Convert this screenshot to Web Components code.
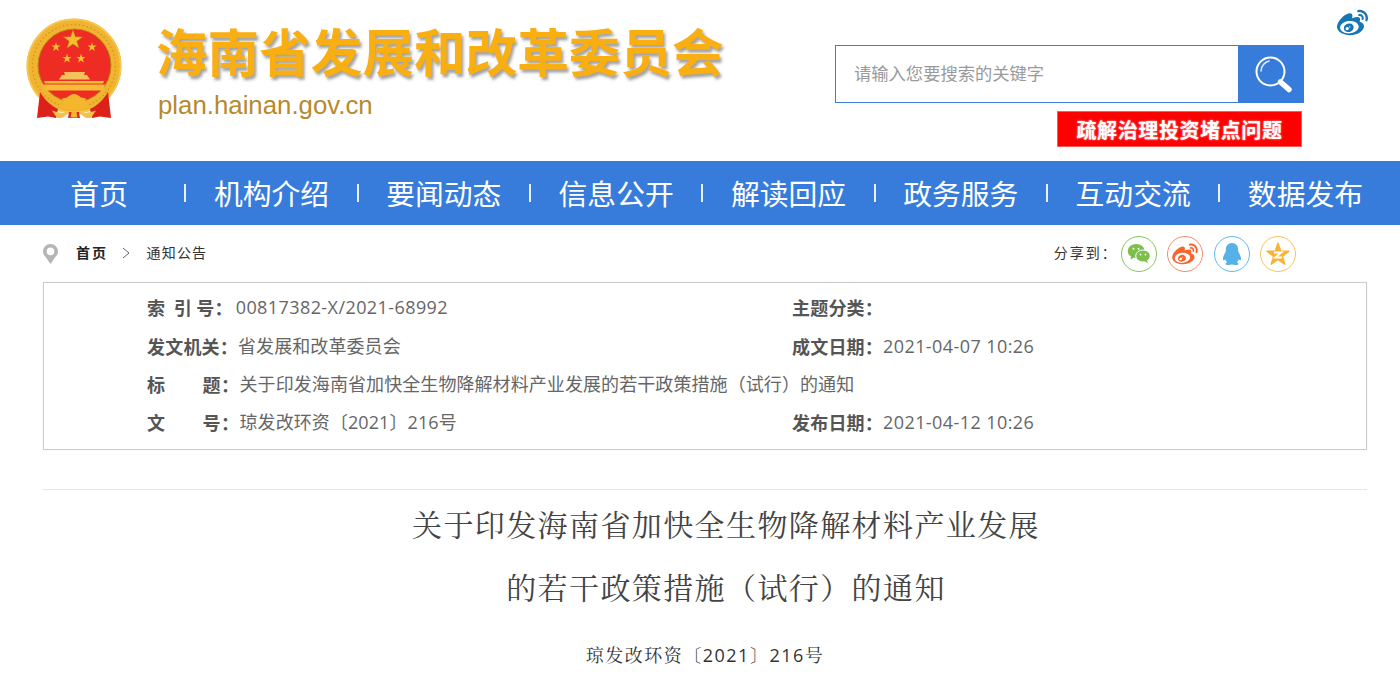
<!DOCTYPE html>
<html lang="zh-CN"><head><meta charset="utf-8"><title>海南省发展和改革委员会</title>
<style>
html,body{margin:0;padding:0;background:#fff;overflow:hidden;height:700px}
body{font-family:"Noto Sans CJK SC","Microsoft YaHei",sans-serif;color:#555}
</style></head><body>
<gov-header></gov-header>
<gov-nav>
  <nav-item>首页</nav-item><nav-item>机构介绍</nav-item><nav-item>要闻动态</nav-item><nav-item>信息公开</nav-item><nav-item>解读回应</nav-item><nav-item>政务服务</nav-item><nav-item>互动交流</nav-item><nav-item last>数据发布</nav-item>
</gov-nav>
<crumb-bar></crumb-bar>
<meta-box>
  <meta-item label="索  引 号：" kind="a">00817382-X/2021-68992</meta-item>
  <meta-item label="主题分类：" kind="b"></meta-item>
  <meta-item label="发文机关：">省发展和改革委员会</meta-item>
  <meta-item label="成文日期：" kind="b">2021-04-07 10:26</meta-item>
  <meta-item wide label="标　　题：">关于印发海南省加快全生物降解材料产业发展的若干政策措施（试行）的通知</meta-item>
  <meta-item label=""></meta-item>
  <meta-item wide label="文　　号：">琼发改环资〔2021〕216号</meta-item>
  <meta-item label="发布日期：" kind="b">2021-04-12 10:26</meta-item>
</meta-box>
<article-head></article-head>
<script>
const WEIBO='M407 177.6c7.6-24-13.4-46.8-37.4-41.7-22 4.8-28.8-28.1-7.1-32.8 50.1-10.9 92.3 37.1 76.5 84.8-6.8 21.2-38.8 10.8-32-10.3zM214.8 446.7C108.5 446.7 0 395.3 0 310.4c0-44.3 28-95.4 76.3-143.7C176 67 279.5 65.8 249.9 161c-4 13.1 12.3 5.7 12.3 6 79.5-33.6 140.5-16.8 114 51.4-3.7 9.4 1.1 10.9 8.3 13.1 135.7 42.3 34.8 215.2-169.7 215.2zm143.7-146.3c-5.4-55.7-78.5-94-163.4-85.7-84.8 8.6-148.8 60.3-143.4 116s78.5 94 163.4 85.7c84.8-8.6 148.8-60.3 143.4-116zM347.9 35.1c-25.9 5.6-16.8 43.7 8.3 38.3 72.3-15.2 134.8 52.8 111.7 124-7.4 24.2 29.1 37 37.4 12 31.9-99.8-55.1-195.9-157.4-174.3zm-78.5 311c-17.1 38.8-66.8 60-109.1 46.3-40.8-13.1-58-53.4-40.3-89.7 17.7-35.4 63.1-55.4 103.4-45.1 42 10.8 63.1 50.2 46 88.5zm-86.3-30c-12.9-5.4-30 .3-38 12.9-8.3 12.9-4.3 28 8.6 34 13.1 6 30.8.3 39.1-12.9 8-13.1 3.7-28.3-9.7-34zm32.6-13.4c-5.1-1.7-11.4.6-14.3 5.4-2.9 5.1-1.4 10.6 3.7 12.9 5.1 2 11.7-.3 14.6-5.4 2.8-5.2 1.1-10.9-4-12.9z';
function star(cx,cy,r,rot){let p=[];for(let i=0;i<10;i++){const a=(rot||0)+(-90+i*36)*Math.PI/180,R=i%2?r*.4:r;p.push((cx+R*Math.cos(a)).toFixed(2)+','+(cy+R*Math.sin(a)).toFixed(2))}return p.join(' ')}
const def=(n,html,extra)=>customElements.define(n,class extends HTMLElement{constructor(){super();this.attachShadow({mode:'open'}).innerHTML=html;}connectedCallback(){extra&&extra(this)}});

def('gov-emblem',`<style>:host{display:block;width:110px;height:115px}svg{display:block;filter:blur(.4px)}</style>
<svg width="110" height="115" viewBox="20 10 110 115">
<circle cx="74" cy="66" r="47.500" fill="#f0b430"/>
<circle cx="74" cy="66" r="46.500" fill="none" stroke="#f7c850" stroke-width="1.500"/>
<circle cx="74" cy="66" r="41.500" fill="none" stroke="#d3951f" stroke-width="1.300" stroke-dasharray="1.500 2.500"/>
<circle cx="74.500" cy="65.500" r="36.500" fill="#ee2c24" stroke="#bf8418" stroke-width="1"/>
<polygon points="${star(73,40,10)}" fill="#f6bd2e" stroke="#b98218" stroke-width=".5"/>
<polygon points="${star(56,47,4.800)}" fill="#f6bd2e"/>
<polygon points="${star(92,47,4.800)}" fill="#f6bd2e"/>
<polygon points="${star(67,58.500,4.800)}" fill="#f6bd2e"/>
<polygon points="${star(81,58.500,4.800)}" fill="#f6bd2e"/>
<path d="M64 72h21l-1 3h3l3 4.500H59l3-4.500h3z" fill="#f3c25a"/>
<path d="M44 81h60l-1 2.500H45z" fill="#f6bb37"/><path d="M43 84.500h62l-2 6H45z" fill="#f6bb37"/>
<path d="M37 118l3-26c4 7 10 13 18 17l-2 9-8-1.500zM111 118l-3-26c-4 7-10 13-18 17l2 9 8-1.500z" fill="#dd211a"/>
<path d="M74 94c3 0 5 2 7 3.500l5 1-1.500 4.500 5.500 2.500-5 2.500c-2 1-7 1-11 1s-9 0-11-1l-5-2.500 5.500-2.500-1.500-4.500 5-1c2-1.500 4-3.500 7-3.500z" fill="#f3b62c"/>
<path d="M52 110.500c5 2 11 2.500 17 2.500l-7 5h-5zM96 110.500c-5 2-11 2.500-17 2.500l7 5h5z" fill="#f5c14a"/><path d="M69 112h10l1 6H68z" fill="#e3271f"/>
<path d="M71.500 112h5l.8 5.500h-6.600z" fill="#f3b62c"/>
</svg>`);

def('site-brand',`<style>:host{display:block;margin-left:26px;padding-top:18px}
.t{font:700 51.6px/64px "Noto Sans CJK SC",sans-serif;color:#f9ae12;text-shadow:2px 3px 3px rgba(70,70,70,.5);white-space:nowrap}
.u{font:25.8px/30px "Liberation Sans",Arial,sans-serif;color:#b68a2c;margin:8px 0 0 2px}</style>
<div class="t">海南省发展和改革委员会</div><div class="u">plan.hainan.gov.cn</div>`);

def('search-box',`<style>:host{display:flex;width:469px;height:58px;box-sizing:border-box}
.i{flex:1;border:1px solid #3b7fdb;border-right:0;box-sizing:border-box;background:#fff;padding-left:18px;font:17.3px/54px "Noto Sans CJK SC",sans-serif;color:#9a9a9a}
.b{width:66px;background:#377cdb;display:flex;align-items:center;justify-content:center}</style>
<div class="i">请输入您要搜索的关键字</div>
<div class="b"><svg width="66" height="58" viewBox="0 0 66 58"><circle cx="32.500" cy="26.500" r="14" fill="none" stroke="#fff" stroke-width="2"/><path d="M23 26c0-5 4-9 8-10" fill="none" stroke="#dfe9f8" stroke-width="1.600" stroke-linecap="round"/><path d="M42.500 37l8.500 7.500" stroke="#fff" stroke-width="5.500" stroke-linecap="round"/></svg></div>`);

def('gov-header',`<style>:host{display:flex;height:161px;background:#fff;padding-left:20px;box-sizing:border-box}
gov-emblem{margin-top:10px}
.r{margin-left:auto;padding-top:45px;width:469px}
.h{display:block;margin:8px 2px 0 auto;width:245px;height:36px;box-sizing:border-box;background:#f00;color:#fff;font:700 20px/35px "Noto Sans CJK SC",sans-serif;letter-spacing:.6px;text-align:center;border:1px solid #ff5a5a;text-shadow:0 0 2px rgba(255,255,255,.8);}
.w{margin-left:33px;margin-right:32px;padding-top:9px;width:31px}
svg{display:block}</style>
<gov-emblem></gov-emblem><site-brand></site-brand>
<div class="r"><search-box></search-box><div class="h">疏解治理投资堵点问题</div></div>
<div class="w"><svg width="31" height="27" viewBox="0 20 512 440" preserveAspectRatio="none"><path fill="#1677b6" d="${WEIBO}"/></svg></div>`);

def('gov-nav',`<style>:host{display:grid;grid-template-columns:repeat(8,172.33px);height:64px;background:#377cdb;padding-left:14px;box-sizing:border-box}</style><slot></slot>`);
def('nav-item',`<style>:host{display:flex;align-items:center;justify-content:center;height:64px;padding-right:2px;box-sizing:border-box;color:#fff;font:400 28.800px/64px "Noto Sans CJK SC",sans-serif;white-space:nowrap;background:linear-gradient(#e8f0fb,#e8f0fb) right center/2px 18px no-repeat}
:host([last]){background:none}</style><slot></slot>`);

def('share-btn',`<style>:host{display:flex;width:36px;height:36px;box-sizing:border-box;border:1.3px solid var(--c);border-radius:50%;align-items:center;justify-content:center}svg{display:block}</style><slot></slot>`);

def('crumb-bar',`<style>:host{display:flex;align-items:center;height:57px;padding:0 104px 0 43px;font:14px/20px "Noto Sans CJK SC",sans-serif;color:#333;letter-spacing:1.2px}
.p{margin-right:18px;display:block}
b{color:#222;font-weight:700;margin-top:-3px;letter-spacing:2px}
.g{margin:-2px 16px 0 12.500px;display:block}
.t{margin-top:-3px}
.s{margin-left:auto;display:flex;align-items:center;gap:10.300px}
.l{margin-right:-7px;letter-spacing:2px;font-size:14px;margin-top:-3px}
svg{display:block}</style>
<svg class="p" width="15" height="20" viewBox="0 0 15 20"><path fill="#b5b5b5" d="M7.500 0C3.400 0 0 3.300 0 7.400c0 2 .9 3.800 2.300 5.200L7.500 20l5.200-7.400C14.100 11.200 15 9.400 15 7.400 15 3.300 11.600 0 7.500 0zm0 11.200a3.800 3.800 0 1 1 0-7.600 3.800 3.800 0 0 1 0 7.600z"/></svg>
<b>首页</b>
<svg class="g" width="10" height="12" viewBox="0 0 10 12"><path d="M2 1l6 5-6 5" fill="none" stroke="#666" stroke-width="1"/></svg>
<span class="t">通知公告</span>
<div class="s"><span class="l">分享到：</span>
<share-btn style="--c:#84c75b"><svg width="24" height="21" viewBox="0 0 24 21"><ellipse cx="9.200" cy="8" rx="8.500" ry="7" fill="#7cbf4a"/><path d="M4 13l-.5 3.500L8 14z" fill="#7cbf4a"/><ellipse cx="16" cy="13" rx="7.300" ry="6" fill="#7cbf4a" stroke="#fff" stroke-width="1"/><path d="M20 17l1 3-4-2z" fill="#7cbf4a"/><circle cx="6.500" cy="5.800" r="1" fill="#fff"/><circle cx="11.500" cy="5.800" r="1" fill="#fff"/><circle cx="13.500" cy="11.500" r=".9" fill="#fff"/><circle cx="18.500" cy="11.500" r=".9" fill="#fff"/></svg></share-btn>
<share-btn style="--c:#fb8a66"><svg width="26" height="22" viewBox="0 20 512 440"><path fill="#f9642c" d="${WEIBO}"/></svg></share-btn>
<share-btn style="--c:#62b7ec"><svg width="20" height="24" viewBox="0 0 20 24"><path fill="#55b2e9" d="M10 1c-4 0-6.200 3-6.200 7v1.500C2.400 12 1 14.500 1 17c0 1.500 1 1.800 2.500.5.300 1.200.9 2.200 1.700 3-1.200.5-2 1-1.700 1.700.5.900 4 .9 6.500.3 2.500.6 6 .6 6.500-.3.300-.7-.5-1.200-1.700-1.700.8-.8 1.400-1.800 1.700-3 1.500 1.300 2.500 1 2.500-.5 0-2.500-1.400-5-2.800-7.500V8c0-4-2.200-7-6.200-7z"/></svg></share-btn>
<share-btn style="--c:#fcc25e"><svg width="24" height="24" viewBox="0 0 24 24"><polygon points="${star(12,12.800,11.500)}" fill="#f9b233" stroke="#f9b233" stroke-width="1.500" stroke-linejoin="round"/><path d="M8 10.500h7.500L9 15.500h7" fill="none" stroke="#fff" stroke-width="1.800"/></svg></share-btn>
</div>`);

def('meta-box',`<style>:host{display:grid;grid-template-columns:645px 1fr;grid-auto-rows:38.300px;margin:0 33px 0 43px;height:168px;box-sizing:border-box;border:1px solid #ccc;padding:5.300px 0 0 103px;box-shadow:0 0 2px rgba(0,0,0,.08)}</style><slot></slot>`);
def('meta-item',`<style>:host{display:flex;align-items:center;font:18px/38px "Open Sans","Noto Sans CJK SC",sans-serif;color:#666;white-space:pre;letter-spacing:.08px}
:host([kind]){letter-spacing:.42px}
b{font-weight:700;color:#555;letter-spacing:.2px;font-family:"Noto Sans CJK SC",sans-serif}
:host([kind=a]) b{margin-right:3px}
:host([wide]) b{letter-spacing:.5px}</style><b></b><slot></slot>`,el=>{el.shadowRoot.querySelector('b').textContent=el.getAttribute('label')||''});

def('article-head',`<style>:host{display:block;margin:39px 33px 0 43px;border-top:1px solid #e6e6e6;text-align:center}
h1{margin:0;padding:2px 0 0 42px;font:400 30px/62.500px "Noto Serif CJK SC","Noto Sans CJK SC",serif;letter-spacing:1.400px;color:#444}
p{margin:23px 0 0;font:18px/30px "Open Sans","Noto Serif CJK SC","Noto Sans CJK SC",serif;color:#333;letter-spacing:1.500px}</style>
<h1>关于印发海南省加快全生物降解材料产业发展<br>的若干政策措施（试行）的通知</h1>
<p>琼发改环资〔2021〕216号</p>`);
</script>
</body></html>
